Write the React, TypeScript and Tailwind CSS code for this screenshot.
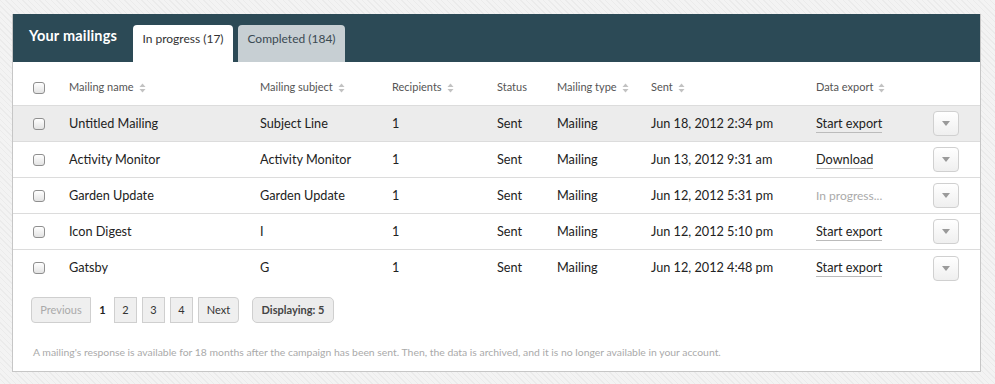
import type { ReactNode } from "react";

type Row = {
  name: string;
  subject: string;
  recipients: string;
  status: string;
  type: string;
  sent: string;
  exportLabel: string;
  exportState: "link" | "pending";
};

const rows: Row[] = [
  { name: "Untitled Mailing", subject: "Subject Line", recipients: "1", status: "Sent", type: "Mailing", sent: "Jun 18, 2012 2:34 pm", exportLabel: "Start export", exportState: "link" },
  { name: "Activity Monitor", subject: "Activity Monitor", recipients: "1", status: "Sent", type: "Mailing", sent: "Jun 13, 2012 9:31 am", exportLabel: "Download", exportState: "link" },
  { name: "Garden Update", subject: "Garden Update", recipients: "1", status: "Sent", type: "Mailing", sent: "Jun 12, 2012 5:31 pm", exportLabel: "In progress...", exportState: "pending" },
  { name: "Icon Digest", subject: "I", recipients: "1", status: "Sent", type: "Mailing", sent: "Jun 12, 2012 5:10 pm", exportLabel: "Start export", exportState: "link" },
  { name: "Gatsby", subject: "G", recipients: "1", status: "Sent", type: "Mailing", sent: "Jun 12, 2012 4:48 pm", exportLabel: "Start export", exportState: "link" },
];

const cols =
  "grid grid-cols-[36px_191px_132px_105px_60px_94px_165px_117px_1fr] items-center pl-[20px] pr-[21px]";

function SortIcon() {
  return (
    <svg width="7" height="10" viewBox="0 0 7 10" className="ml-[5px] inline-block">
      <path d="M3.5 0.5 L6.5 4 L0.5 4 Z" fill="#c2c2c2" />
      <path d="M0.5 6 L6.5 6 L3.5 9.5 Z" fill="#c2c2c2" />
    </svg>
  );
}

function Checkbox() {
  return (
    <span className="block h-[12px] w-[12px] rounded-[3px] border border-[#8f8f8f] bg-gradient-to-b from-white to-[#e3e3e3]" />
  );
}

function HeadCell({ children, sort }: { children: ReactNode; sort?: boolean }) {
  return (
    <div className="flex items-center text-[11px] text-[#555]">
      {children}
      {sort && <SortIcon />}
    </div>
  );
}

function MenuButton() {
  return (
    <button className="flex h-[25px] w-[26px] items-center justify-center rounded-[4px] border border-[#d0d0d0] bg-gradient-to-b from-white to-[#efefef]">
      <svg width="8" height="5" viewBox="0 0 8 5">
        <path d="M0 0 L8 0 L4 5 Z" fill="#9a9a9a" />
      </svg>
    </button>
  );
}

function PageBox({ children, className }: { children: ReactNode; className?: string }) {
  return (
    <span
      className={
        "flex h-[26px] items-center justify-center border border-[#cfcfcf] bg-[#efefef] text-[11px] " +
        (className ?? "")
      }
    >
      {children}
    </span>
  );
}

export default function App() {
  return (
    <div
      className="h-[384px] w-[995px] bg-[#efefef] bg-[repeating-linear-gradient(45deg,#f3f3f3_0px,#f3f3f3_3px,#ebebeb_3px,#ebebeb_4px),repeating-linear-gradient(-45deg,transparent_0px,transparent_3px,#ebebeb_3px,#ebebeb_4px)] pl-[12px] pt-[14px]"
      style={{ fontFamily: "Lato, 'Open Sans', Arial, sans-serif" }}
    >
      <div className="h-[358px] w-[969px] border-r border-b border-l border-[#c6c6c6] bg-white">
        <div className="flex h-[48px] items-end bg-[#2c4a56] pl-[16px]">
          <h1 className="mb-[15px] w-[104px] shrink-0 text-[14.5px] font-bold tracking-[0.2px] text-white">
            Your mailings
          </h1>
          <div className="flex h-[37px] w-[100px] justify-center rounded-t-[4px] bg-white pt-[5px] text-[12px] text-[#333]">
            In progress (17)
          </div>
          <div className="ml-[5px] flex h-[37px] w-[107px] justify-center rounded-t-[4px] bg-[#c7cfd3] pt-[5px] text-[12px] text-[#3b4a52]">
            Completed (184)
          </div>
        </div>

        <div className={cols + " h-[44px] border-b border-[#dcdcdc] pt-[8px]"}>
          <Checkbox />
          <HeadCell sort>Mailing name</HeadCell>
          <HeadCell sort>Mailing subject</HeadCell>
          <HeadCell sort>Recipients</HeadCell>
          <HeadCell>Status</HeadCell>
          <HeadCell sort>Mailing type</HeadCell>
          <HeadCell sort>Sent</HeadCell>
          <HeadCell sort>Data export</HeadCell>
          <div />
        </div>

        {rows.map((r, i) => (
          <div
            key={r.name}
            className={
              cols +
              " h-[36px] text-[12.7px] text-[#222] " +
              (i === 0 ? "bg-[#ececec] " : "") +
              (i < rows.length - 1 ? "border-b border-[#dcdcdc]" : "")
            }
          >
            <Checkbox />
            <div>{r.name}</div>
            <div>{r.subject}</div>
            <div>{r.recipients}</div>
            <div>{r.status}</div>
            <div>{r.type}</div>
            <div>{r.sent}</div>
            <div>
              {r.exportState === "link" ? (
                <span className="border-b border-[#bbb] pb-[1px]">{r.exportLabel}</span>
              ) : (
                <span className="text-[12px] text-[#aaa]">{r.exportLabel}</span>
              )}
            </div>
            <div className="flex justify-start">
              <MenuButton />
            </div>
          </div>
        ))}

        <div className="mt-[11px] flex items-center pl-[18px]">
          <PageBox className="w-[60px] rounded-l-[4px] text-[#aaa]">Previous</PageBox>
          <span className="w-[23px] text-center text-[11px] font-bold text-[#222]">1</span>
          <div className="flex gap-[5px]">
            <PageBox className="w-[23px] text-[#333]">2</PageBox>
            <PageBox className="w-[23px] text-[#333]">3</PageBox>
            <PageBox className="w-[23px] text-[#333]">4</PageBox>
            <PageBox className="w-[41px] rounded-r-[4px] text-[#333]">Next</PageBox>
          </div>
          <span className="ml-[13px] flex h-[26px] w-[82px] items-center justify-center rounded-[5px] border border-[#cfcfcf] bg-[#ececec] text-[11px] font-bold text-[#444]">
            Displaying: 5
          </span>
        </div>

        <p className="mt-[22px] pl-[20px] text-[10.4px] text-[#aaa]">
          A mailing's response is available for 18 months after the campaign has been sent. Then, the data is archived, and it is no longer available in your account.
        </p>
      </div>
    </div>
  );
}
